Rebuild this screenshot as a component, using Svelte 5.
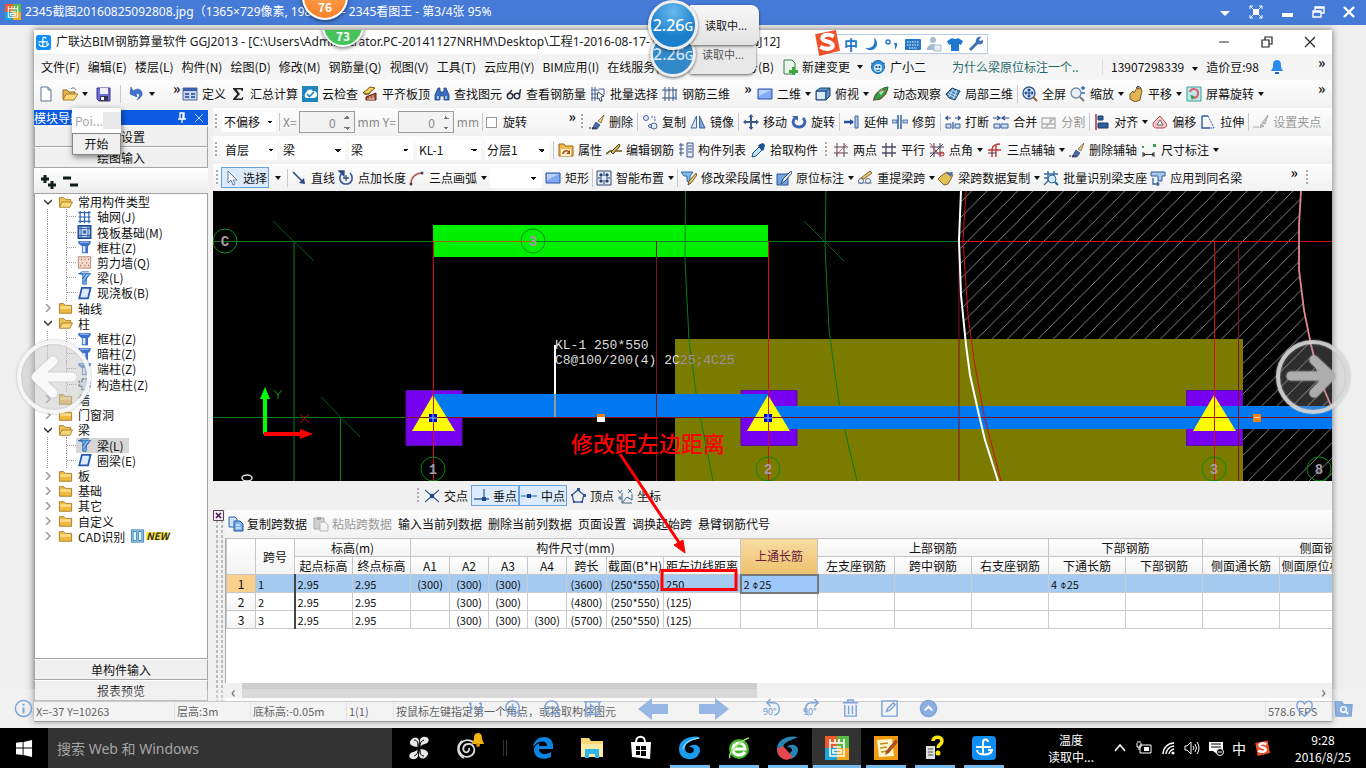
<script>
  const icons = {
    new: '<path d="M3 1h7l3 3v11H3z" fill="#fff" stroke="#5b7190"/><path d="M10 1v3h3" fill="#c9d6ea" stroke="#5b7190"/>',
    open: '<path d="M1 13V4h4l2 2h6v3" fill="#e9b84c" stroke="#8c6a1e"/><path d="M1 14l3-6h12l-4 6z" fill="#ffd977" stroke="#a67c20"/><path d="M9 3c2-2 4-1 5 1" fill="none" stroke="#567"/>',
    save: '<path d="M1 2h13v13H3l-2-2z" fill="#6d6ed6" stroke="#35358a"/><path d="M4 2h8v6H4z" fill="#eef"/><path d="M4 10h8v5H4z" fill="#335"/><path d="M5 11h3v3H5z" fill="#fff"/>',
    undo: '<path d="M4 5c5-4 10-1 9 4-1 2-3 4-5 5 3-4 4-7-1-6l1 3-7-3 1-7z" fill="#3f74cf" stroke="#2a559e" stroke-width=".6"/>',
    define: '<path d="M1 2h14v12H1z" fill="#c4d6f3" stroke="#54698f"/><path d="M1 2h14v3H1z" fill="#3d5ea8"/><path d="M3 7h4v2H3zm0 3h4v2H3zm6-3h4v2H9zm0 3h4v2H9z" fill="#4a6ab0"/>',
    sigma: '<path d="M3 2h10v3h-1l-1-1.500H6.500L10 8l-4 4.500h5.500L12.500 11h.8l-.8 3H3v-1l4.300-5L3 3z" fill="#222"/>',
    cloud: '<path d="M0 0h16v16H0z" fill="#1e86bd"/><path d="M4 12a3 3 0 010-5 4 4 0 017-2 3.500 3.500 0 011 7z" fill="#fff"/><path d="M5 8l2.500 2.500L12 6" fill="none" stroke="#1e86bd" stroke-width="1.600"/>',
    slab: '<path d="M1 7l7-6 5 1-7 6z" fill="#f3cb5a" stroke="#7c5515"/><path d="M2 8l4 1 3-3" fill="none" stroke="#863"/><path d="M4 11l10-4v7H4z" fill="#a34a38" stroke="#5a1d12"/><path d="M5 13h8M8 10v4m3-5v5" stroke="#f0c4a0"/>',
    find: '<path d="M4 2h2v3l1 1h2l1-1V2h2l3 7v5h-5v-4H6v4H1V9z" fill="#3c6fc0" stroke="#1d3e7c" stroke-width=".8"/><path d="M3 10h2v3H3zm8 0h2v3h-2z" fill="#9fc3f3"/>',
    glasses: '<g fill="none" stroke="#2b3440" stroke-width="1.500"><circle cx="4" cy="10" r="2.700"/><circle cx="11" cy="10" r="2.700"/><path d="M7 9l1 0M1.500 9L6 4m7.500 5l1-6"/></g>',
    batch: '<path d="M2 1v14M5 1v14M1 4h8M1 8h6M1 12h5M9 3h5v6" fill="none" stroke="#40619b"/><path d="M8 6l6 4-3 1 1 4-2 0-1-3-2 1z" fill="#fff" stroke="#345"/>',
    rebar: '<path d="M3 1v14M7 1v14M11 1v14M14 3v11M0 4h15M0 12h15" fill="none" stroke="#33507f"/><path d="M1 3l4 3m6 4l4 3" stroke="#7b9acb"/>',
    rect: '<path d="M1 3h14v10H1z" fill="#82aaf2" stroke="#2855a8"/><path d="M2 4h12L2 10z" fill="#bcd2fb"/>',
    cube: '<path d="M1 5l4-3h10v8l-4 4H1z" fill="#5b8fc9" stroke="#20456f"/><path d="M2 6h8v7H2z" fill="#d9ebfb"/><path d="M1 5h10v9M11 5l4-3" fill="none" stroke="#20456f"/>',
    orbit: '<path d="M1 14C1 8 7 2 15 1 14 9 8 14 1 14z" fill="#2fa34a" stroke="#14652a"/><path d="M5 6l4-3 2 2-3 4z" fill="#a7ecae"/><path d="M0 15c2-6 6-10 12-12M5 14c4-1 8-5 9-10" fill="none" stroke="#b0392c"/>',
    local: '<path d="M1 8l6-6 8 3-5 9-6-2z" fill="#4b86b6" stroke="#1e4868"/><path d="M4 6l8 4M7 4l5 3M3 8l7 4M8 3L4 11m8-7L8 13" stroke="#c4e0f4"/>',
    full: '<circle cx="7" cy="7" r="6" fill="#dce9fb" stroke="#3b5c92" stroke-width="1.400"/><path d="M7 3v8M3 7h8M5.500 4.500L7 3l1.500 1.500M5.500 9.500L7 11l1.500-1.500M4.500 5.500L3 7l1.500 1.500M9.500 5.500L11 7 9.500 8.500" fill="none" stroke="#234d96" stroke-width="1.200"/><path d="M11 11l4 4" stroke="#8c6a33" stroke-width="2"/>',
    zoom: '<circle cx="6" cy="7" r="5" fill="#e6f0fb" stroke="#7088a8" stroke-width="1.300"/><path d="M10 11l4 4" stroke="#777" stroke-width="2"/><path d="M11 2h4M13 0v4M11 7h4" stroke="#2d6fc0" stroke-width="1.500"/>',
    hand: '<path d="M2 8l3-3 1 2 3-5 2 1 2-1 1 3-2 9-5 2-5-3z" fill="#e2b455" stroke="#7a5a1a"/><path d="M10 3V0M8 2l2-2 3 2" fill="none" stroke="#444"/>',
    screen: '<path d="M1 1h14v14H1z" fill="#bce9e7" stroke="#3d9aa0"/><path d="M4 6c1-4 8-4 8 1s-4 5-5 5" fill="none" stroke="#e35a6c" stroke-width="2"/><path d="M4 9l5 1-3 4z" fill="#2fa352"/>',
    brush: '<path d="M15 1L9 7l3 2z" fill="#e7c77c" stroke="#6d5730" stroke-width=".7"/><path d="M7 8l4 3-3 4H3z" fill="#4a68ad" stroke="#2a3a66" stroke-width=".7"/><path d="M0 14h7" stroke="#222" stroke-dasharray="2 1"/>',
    copyo: '<g fill="#dfe9f7" stroke="#4c6791"><circle cx="4" cy="4" r="2.500"/><circle cx="12" cy="12" r="3"/><circle cx="8" cy="12" r="1.500"/></g><path d="M9 3h4v4" fill="none" stroke="#4c6791" stroke-dasharray="2 1"/>',
    mirror: '<path d="M6.500 2v12H1z" fill="#dce8f8" stroke="#41659d"/><path d="M9.500 2v12H15z" fill="#7fa4dc" stroke="#41659d"/>',
    move: '<path d="M8 0l2.500 3H9v4h4V5.500L16 8l-3 2.500V9H9v4h1.500L8 16l-2.500-3H7V9H3v1.500L0 8l3-2.500V7h4V3H5.500z" fill="#3c5a88"/>',
    rotate: '<path d="M4 4C0 8 3 13 8 13s8-5 4-9" fill="none" stroke="#3a63b3" stroke-width="2.800"/><path d="M1 2h6v5z" fill="#3a63b3"/>',
    extend: '<path d="M0 8h9" stroke="#234f9c" stroke-width="2.500"/><path d="M6 5l4 3-4 3z" fill="#234f9c"/><path d="M11 2h3v12h-3z" fill="#a9c5ed" stroke="#3f639b"/>',
    trim: '<path d="M0 6h5v3H0zM11 6h5v3h-5z" fill="#b0c7e8" stroke="#3f639b" stroke-width=".8"/><path d="M6 1v14M9 1v14" stroke="#31609f" stroke-width="1.500"/>',
    breaks: '<path d="M1 10h5v4H1zm9 0h5v4h-5z" fill="#cbdcf4" stroke="#3d5f99"/><path d="M0 4h6M10 4h6M3 2L1 4l2 2m10-4l2 2-2 2M8 8v7" fill="none" stroke="#2d4f8d" stroke-width="1.200"/>',
    merge: '<path d="M1 10h6v4H1zm7 0h7v4H8z" fill="#cbdcf4" stroke="#3d5f99"/><path d="M0 4h6M10 4h6M4 2l3 2-3 2m8-4L9 4l3 2" fill="none" stroke="#2d4f8d" stroke-width="1.200"/>',
    split: '<path d="M1 4h13v10H1zM1 10h6M5 13l8-9M9 4v6h5" fill="none" stroke="#b3b3b3" stroke-width="1.400"/>',
    align: '<path d="M2 0v16" stroke="#b0303a" stroke-width="1.500"/><path d="M4 2h5v4H4zm0 7h10v5H4z" fill="#2c6098" stroke="#153c68"/>',
    offset: '<path d="M8 2l6 7c2 4-1 5-4 5H5c-4 0-5-3-3-6z" fill="#f2c8cd" stroke="#b84a57"/><path d="M8 6l3 5H5z" fill="#fff" stroke="#666"/>',
    stretch: '<path d="M2 2h6M2 2v12h8" fill="none" stroke="#2c5aa0" stroke-width="1.400"/><path d="M8 2l6 12h-4" fill="none" stroke="#2c5aa0" stroke-dasharray="2 1"/>',
    grip: '<path d="M15 1L9 9l3 1zM8 10l-1 4 4-2zM0 13h6" fill="#ccc" stroke="#aaa"/>',
    prop: '<path d="M1 2h5l1 2h8v10H1z" fill="#f0bb52" stroke="#9c6414"/><path d="M3 7h10v7H3z" fill="#fff3d0"/><path d="M4 12c1-4 4-5 7-3l1-2v5H8l2-2c-2-1-4 0-4 2z" fill="#a0521a"/>',
    edit: '<path d="M0 12l4-3h12" fill="none" stroke="#6b5a20" stroke-width="1.600"/><path d="M5 10l8-8 1 2-7 8z" fill="#ddb24a" stroke="#4b3a12"/>',
    list: '<path d="M9 1h6v14H9z" fill="#e3ecf8" stroke="#39558a"/><path d="M10 4h4M10 7h4M10 10h4M1 3h5M1 7h5M1 11h5M3 1v13" stroke="#39558a"/>',
    pick: '<path d="M2 15l1-4 6-6 3 3-6 6z" fill="#bde3f8" stroke="#1e4f78"/><path d="M8 4l5 5 1-2 1-4-2-2-3 1z" fill="#1f4f93"/>',
    two: '<path d="M1 5h14M1 11h14M4 1v14M11 1v14" stroke="#5b4753"/><path d="M3 13L14 2" stroke="#a44" stroke-dasharray="2 1"/>',
    para: '<path d="M1 5h14M1 11h14M5 1v14M11 1v14" stroke="#4a4860" stroke-width="1.300"/>',
    angle: '<path d="M1 5h14M1 11h14M5 1v14M11 1v14M1 15L14 2" stroke="#46415e"/><circle cx="13" cy="12" r="2" fill="none" stroke="#d22"/><path d="M1 1l9 12" stroke="#c44"/>',
    three: '<path d="M5 15V7c1-4 4-5 8-5M1 8h13M9 3v12" fill="none" stroke="#b8383c" stroke-width="1.400"/><path d="M1 11h8" stroke="#446"/>',
    dim: '<path d="M2 10v5M13 10v5M2 12.500h11M4 11l-2 1.500L4 14m7-3l2 1.500-2 1.500" fill="none" stroke="#333"/><path d="M1 4h2v2H1zm11-2h3v3h-3z" fill="#3a9a4a"/>',
    select: '<path d="M5 1v12l3-3 2 5 2-1-2-4h4z" fill="#fff" stroke="#667a98"/>',
    line: '<path d="M2 2l11 11" stroke="#2e4a7c" stroke-width="1.600"/><path d="M14 14l-6-1 5-5z" fill="#2e4a7c"/>',
    addlen: '<path d="M4 3C0 8 2 14 8 14s8-6 4-11" fill="none" stroke="#3a5c98" stroke-width="1.600"/><path d="M1 1h5v5zM8 5v6M5 8h6" stroke="#2f4f88" fill="#2f4f88" stroke-width="1.300"/>',
    arc: '<path d="M2 14C2 7 7 3 13 3" fill="none" stroke="#b75a52" stroke-width="1.600"/><circle cx="2" cy="14" r="1.500" fill="#346"/><circle cx="13" cy="3" r="1.500" fill="#346"/>',
    smart: '<path d="M1 1h14v14H1z" fill="#dfe8f4" stroke="#3b4d70"/><path d="M8 2v4M8 10v4M2 8h4M10 8h4M4 4h2v2H4zm6 6h2v2h-2zm0-6h2v2h-2zM4 10h2v2H4z" stroke="#24406e" fill="#24406e"/>',
    seg: '<path d="M0 2h12l-3 4v8l-3-3V6H3z" fill="#86bce8" stroke="#2567a3"/><path d="M15 3L8 11l-1 4 3-2 6-8z" fill="#e8c462" stroke="#4d3c16" stroke-width=".8"/>',
    situ: '<path d="M1 4h11v11H1z" fill="#73a5e0" stroke="#28589c"/><path d="M15 1L7 9l-2 5 4-3 7-8z" fill="#eef4fc" stroke="#2b4574"/>',
    respan: '<path d="M1 13h14" stroke="#7d8aa4"/><circle cx="4" cy="11" r="2.500" fill="none" stroke="#5b7199"/><circle cx="11" cy="11" r="2.500" fill="none" stroke="#5b7199"/><path d="M4 8l9-7 2 2-8 6z" fill="#e6c277" stroke="#8a6a2c"/>',
    datacopy: '<path d="M3 6l6-4 6 3-5 9-4 1-6-6z" fill="#e4c25a" stroke="#7f6318"/><path d="M8 3l5 4 2-5z" fill="#4a6eae"/>',
    ident: '<path d="M1 4h14M1 8h10M5 1v10l-4 4M11 1v4" stroke="#356a9c" fill="none" stroke-width="1.400"/><circle cx="9" cy="9" r="4" fill="#d2e8f6" stroke="#2b6296"/><path d="M12 12l3 3" stroke="#2b6296" stroke-width="2"/>',
    apply: '<path d="M1 2h14v4h-3v5H8V6H1z" fill="#a7c8ec" stroke="#2f5f9c"/><path d="M3 8v6h6m-2-2l2 2-2 2" fill="none" stroke="#2f5f9c" stroke-width="1.300"/>',
    doc: '<path d="M2 1h8l3 3v11H2z" fill="#eaf6ea" stroke="#3b7a4c"/><path d="M7 11h3V8h3v3h3v3h-3v2h-3v-2H7z" fill="#3ba53e"/>',
    face: '<circle cx="8" cy="8" r="6.500" fill="#3391dc" stroke="#1767ad"/><circle cx="8" cy="9" r="4" fill="#cfeafd"/><circle cx="6.500" cy="8" r="1" fill="#135"/><circle cx="9.500" cy="8" r="1" fill="#135"/><path d="M6 11q2 1.500 4 0M1 4l3 1m11-1l-3 1" stroke="#1767ad" fill="none"/>',
    bell: '<path d="M8 1c4 0 4 4 4 6 0 3 2 4 2 5H2c0-1 2-2 2-5 0-2 0-6 4-6z" fill="#2a8bee"/><path d="M6 13h4v2H6z" fill="#1b66b8"/>',
    cross: '<path d="M1 2l14 12M15 2L1 14" stroke="#3b629e" stroke-width="1.200"/><path d="M6 6h4v4H6z" fill="#1c458e"/>',
    perp: '<path d="M1 11h15M11 1v12" stroke="#3b629e" stroke-width="1.300"/><path d="M9 9h4v4H9z" fill="#1c458e"/>',
    mid: '<path d="M0 8h16" stroke="#3b78b8" stroke-width="1.200"/><path d="M6 6h4v4H6z" fill="#123f9a"/>',
    vertex: '<path d="M8 2l6 5-2 7H4L2 7z" fill="none" stroke="#3b629e" stroke-width="1.400"/><path d="M7 0h3v3H7zM1 6h2v2H1zm12 0h3v3h-3zM3 13h2v2H3zm8 0h2v2h-2z" fill="#2c559c"/>',
    coord: '<path d="M5 5v10h10M5 15l5-6 5 3V6" fill="none" stroke="#3c6580"/><path d="M1 2l2 3 2-3M11 1l4 4m0-4l-4 4M2 9h2v2H2z" fill="none" stroke="#47708c"/>',
    copy: '<path d="M1 1h6l2 2v8H1z" fill="#cfe2f8" stroke="#2f67ad"/><path d="M6 5h6l3 3v7H6z" fill="#7db0ea" stroke="#1f559c"/><path d="M8 9h4M8 12h5" stroke="#fff"/>',
    paste: '<path d="M1 2h10v11H1z" fill="#d0d0d0" stroke="#aaa"/><path d="M4 1h4v3H4z" fill="#a5a5a5"/><path d="M7 6h5l3 3v6H7z" fill="#f2f2f2" stroke="#b5b5b5"/>',
    folder: '<path d="M1 14V3h5l2 2h7v9z" fill="#efb83f" stroke="#a07826"/><path d="M2 6h12v3H2z" fill="#fbdc8a"/>',
    folderopen: '<path d="M1 13V3h5l2 2h6v3" fill="#efc25a" stroke="#a07826"/><path d="M1 14l3-6h12l-3 6z" fill="#fcd87c" stroke="#a07826"/>',
    grid: '<path d="M1 3h14M1 8h14M1 13h14M3 1v14M8 1v14M13 1v14" stroke="#2f63b4" stroke-width="1.400"/>',
    raft: '<path d="M1 1h14v14H1z" fill="#cfe0fa" stroke="#1e4b9c" stroke-width="2"/><path d="M4 1v14M12 1v14M1 4h14M1 12h14" stroke="#1e4b9c"/><path d="M6 6h4v4H6z" fill="#3e74cc"/>',
    column: '<path d="M1 1h14v3l-3 3v8H5V7L1 4z" fill="#3c6fca"/><path d="M6 7h3v7H6z" fill="#dbe9fd"/><path d="M3 2h10v1H3z" fill="#c4d9fa"/>',
    wall: '<path d="M1 2h14v13H1z" fill="#f1d9cf" stroke="#b07b66"/><path d="M4 5h1M8 5h1M12 5h1M5 9h1M10 9h1M3 12h1M8 12h1M12 12h1" stroke="#b0552f" stroke-width="1.500"/>',
    beam: '<path d="M1 3l5 1v11h4V8l5-5H9z" fill="#8dbdf2" stroke="#1e65b8"/><path d="M6 9l4-6M7 13l6-8M2 3L5 1h8" stroke="#1d5ba8" fill="none"/>',
    plate: '<path d="M5 2h10l-3 12H2z" fill="#dce9fc" stroke="#2458b0" stroke-width="2"/>',
    poly: '<path d="M5 2h6v3h3v6h-3v3H5v-3H2V5h3z" fill="#dce9fc" stroke="#47699c" stroke-width="2" stroke-dasharray="3 1"/>',
    cad: '<path d="M1 1h14v14H1z" fill="#9dd0f2" stroke="#3d7ba7"/><path d="M3 3h4v10H3zm6 0h4v10H9z" fill="#e8f6ff" stroke="#3d7ba7"/>'
  };

  const menus = ['文件(F)', '编辑(E)', '楼层(L)', '构件(N)', '绘图(D)', '修改(M)', '钢筋量(Q)', '视图(V)', '工具(T)', '云应用(Y)', 'BIM应用(I)', '在线服务(S)'];
  const main1 = [['define', '定义'], ['sigma', '汇总计算'], ['cloud', '云检查'], ['slab', '平齐板顶'], ['find', '查找图元'], ['glasses', '查看钢筋量'], ['batch', '批量选择'], ['rebar', '钢筋三维']];
  const main2 = [['rect', '二维', 1], ['cube', '俯视', 1], ['orbit', '动态观察'], ['local', '局部三维'], null, ['full', '全屏'], ['zoom', '缩放', 1], ['hand', '平移', 1], ['screen', '屏幕旋转', 1]];
  const editA = [['brush', '删除'], null, ['copyo', '复制'], ['mirror', '镜像'], null, ['move', '移动'], ['rotate', '旋转'], null, ['extend', '延伸'], ['trim', '修剪'], null, ['breaks', '打断'], ['merge', '合并'], ['split', '分割', 0, 1], null, ['align', '对齐', 1], ['offset', '偏移'], ['stretch', '拉伸'], null, ['grip', '设置夹点', 0, 1]];
  const listB = [['prop', '属性'], ['edit', '编辑钢筋'], ['list', '构件列表'], ['pick', '拾取构件']];
  const axisB = [['two', '两点'], ['para', '平行'], ['angle', '点角', 1], ['three', '三点辅轴', 1], ['brush', '删除辅轴'], ['dim', '尺寸标注', 1]];
  const drawC = [['line', '直线'], ['addlen', '点加长度'], ['arc', '三点画弧', 1]];
  const drawC2 = [['rect', '矩形'], null, ['smart', '智能布置', 1], null, ['seg', '修改梁段属性'], ['situ', '原位标注', 1], ['respan', '重提梁跨', 1], ['datacopy', '梁跨数据复制', 1], ['ident', '批量识别梁支座'], ['apply', '应用到同名梁']];
  const combos = [['楼层', '首层'], ['构件大类', '梁'], ['构件类型', '梁'], ['构件', 'KL-1'], ['分层', '分层1']];

  const tree = [
    ['常用构件类型', 'open'], ['轴网(J)', 'grid'], ['筏板基础(M)', 'raft'], ['框柱(Z)', 'column'], ['剪力墙(Q)', 'wall'], ['梁(L)', 'beam'], ['现浇板(B)', 'plate'],
    ['轴线', 'shut'], ['柱', 'open'], ['框柱(Z)', 'column'], ['暗柱(Z)', 'column'], ['端柱(Z)', 'column'], ['构造柱(Z)', 'poly'],
    ['墙', 'shut'], ['门窗洞', 'shut'], ['梁', 'open'], ['梁(L)', 'beam', 'sel'], ['圈梁(E)', 'plate'],
    ['板', 'shut'], ['基础', 'shut'], ['其它', 'shut'], ['自定义', 'shut'], ['CAD识别', 'shut', 'new']
  ];

  const colWidths = [29, 39, 58, 58, 39, 39, 39, 39, 40, 57, 77, 77, 77, 77, 77, 77, 77, 77, 88, 77];
  const subHeads = ['起点标高', '终点标高', 'A1', 'A2', 'A3', 'A4', '跨长', '截面(B*H)', '距左边线距离'];
  const subHeads2 = ['左支座钢筋', '跨中钢筋', '右支座钢筋', '下通长筋', '下部钢筋', '侧面通长筋', '侧面原位标注筋', '拉筋'];
  const rows = [
    ['1', '2.95', '2.95', '(300)', '(300)', '(300)', '', '(3600)', '(250*550)', '250', '2 ⌽25', '', '', '', '4 ⌽25', '', '', '', ''],
    ['2', '2.95', '2.95', '', '(300)', '(300)', '', '(4800)', '(250*550)', '(125)', '', '', '', '', '', '', '', '', ''],
    ['3', '2.95', '2.95', '', '(300)', '(300)', '(300)', '(5700)', '(250*550)', '(125)', '', '', '', '', '', '', '', '', '']
  ];
  const axes = [[225, 241, 'C'], [533, 241, '3'], [433, 469, '1'], [768, 469, '2'], [1214, 469, '3'], [1319, 469, '8']];

  const apps = [
    ['搜狗', '', '<g fill="#e8e8e8"><path d="M11 11C4 11 1 7 4 4c3-4 8-3 8 1zM13 11c0-6-1-9 3-10 5-1 7 3 5 5-2 3-5 1-8 5zM13 13c7 0 10 4 7 7-3 4-8 3-8-1zM11 13c0 6 1 9-3 10-5 1-7-3-5-5 2-3 5-1 8-5z"/></g><path d="M7 4c3 0 4 2 4 7M17 4c-3 1-4 3-4 7M17 20c-3 0-4-2-4-7M7 20c3-1 4-3 4-7" fill="none" stroke="#000"/>'],
    ['提醒', '', '<g fill="none" stroke="#ddd" stroke-width="1.800"><path d="M17 6C10 1 2 7 3 14c1 6 8 9 13 5 5-5 1-12-4-11-5 0-6 6-3 8 2 1 5-1 4-4"/><path d="M6 5C0 10 1 19 8 22"/></g><path d="M22-3c4 0 4 4 4 6l2 5H16l2-5c0-2 0-6 4-6z" fill="#f1b40f"/><circle cx="22" cy="9" r="2" fill="#d98f0b"/>'],
    ['Edge', '', '<path d="M2 11C3 4 8 1 13 1c6 0 10 4 9 12H8c0 6 8 6 12 3v5C12 25 3 22 3 14c0-4 3-6 6-7-1 1-1 2-1 3h8c0-6-9-6-14 1z" fill="#0a84e3"/>'],
    ['文件资源管理器', '', '<path d="M1 2h8l2 3h12v16H1z" fill="#f7d774"/><path d="M1 8h22v13H1z" fill="#fce9a4"/><path d="M5 22v-9h14v9h-4v-4H9v4z" fill="#2db4e8"/>'],
    ['应用商店', '', '<path d="M2 6h20l-1 17-18-2z" fill="#fff"/><path d="M7 6c0-7 9-7 9 0" fill="none" stroke="#fff" stroke-width="2"/><path d="M7 10h4v4H7zm5 0h5v4h-5zm-5 5h4v4H7zm5 0h5v5h-5z" fill="#000"/>'],
    ['广联达', 'run', '<path d="M22 1C14-1 1 2 1 13c0 13 20 14 21 1 0-5-7-7-11-3 3 0 5 1 5 3-1 5-9 4-9-2C7 6 14 5 22 1z" fill="#1c9cf0"/><path d="M21 2C13 4 7 5 5 13" fill="none" stroke="#8bd6ff" stroke-width="1.500"/>'],
    ['360浏览器', 'run', '<circle cx="12" cy="13" r="10" fill="#46b82c"/><path d="M6 13h12c0-8-12-8-12 0s9 7 12 3" fill="none" stroke="#fff" stroke-width="3"/><path d="M3 22C0 18 14 4 22 2" fill="none" stroke="#a5e887" stroke-width="1.600"/>'],
    ['广联达服务', 'run', '<path d="M22 1C14-1 1 2 1 13c0 13 20 14 21 1 0-5-7-7-11-3 3 0 5 1 5 3-1 5-9 4-9-2C7 6 14 5 22 1z" fill="#2585b5"/><path d="M1 13l6-3 10 11-6 3C4 23 1 18 1 13z" fill="#e2474f"/>'],
    ['2345看图王', 'run on', '<path d="M0 0h12v12H0z" fill="#f0592a"/><path d="M12 0h12v12H12z" fill="#57b947"/><path d="M0 12h12v12H0z" fill="#1fa3dc"/><path d="M12 12h12v12H12z" fill="#f3a51c"/><path d="M5 7h14v13H5zM5 3v4M10 3v4M14 3v4M19 3v4M8 11h8M8 14h8v3H8z" fill="none" stroke="#fff" stroke-width="1.600"/>'],
    ['便签', 'run', '<path d="M0 0h24v24H0z" fill="#f29a12"/><path d="M3 4l15-1 2 17-15 1z" fill="#fff6cf"/><path d="M6 8l8-1M6 12l7-1M7 16l7-1" stroke="#c58a2a" stroke-width="1.500"/><path d="M22 3L12 15l-1 4 4-2L24 6z" fill="#a8541a"/>'],
    ['帮助', 'run', '<path d="M3 10h9v13H3z" fill="#ddd"/><path d="M5 13h5M5 16h5M5 19h5" stroke="#555"/><path d="M10 5c0-5 9-5 9 0 0 4-4 3-4 7" fill="none" stroke="#ffe70e" stroke-width="3.500"/><circle cx="15" cy="17" r="2.500" fill="#ffe70e"/>'],
    ['GGJ2013', 'run', '<rect width="24" height="24" rx="4" fill="#0d8ff5"/><path d="M11 19V6a2.500 2.500 0 015 0M4 11h15M5 14c0 6 14 6 15 0h-4" fill="none" stroke="#fff" stroke-width="2"/>']
  ];
</script>

{#snippet ic(name)}
  <svg class="ic" viewBox="0 0 16 16" aria-hidden="true">{@html icons[name]}</svg>
{/snippet}
{#snippet tools(items)}
  {#each items as t}
    {#if t}
      <button class="tool" disabled={!!t[3]}>{@render ic(t[0])}<span>{t[1]}</span>{#if t[2]}<i class="caret"></i>{/if}</button>
    {:else}
      <span class="sep"></span>
    {/if}
  {/each}
{/snippet}

<div class="viewer">
  <header class="vbar">
    <svg class="vlogo" viewBox="0 0 24 24" aria-hidden="true">{@html apps[8][2]}</svg>
    <h1>2345截图20160825092808.jpg（1365×729像素, 198KB） - 2345看图王 - 第3/4张 95%</h1>
    <div class="vctl">
      <button aria-label="菜单"><svg viewBox="0 0 14 14"><path d="M2 6h10l-5 5z" fill="#fff"/></svg></button>
      <button aria-label="全屏"><svg viewBox="0 0 14 14"><path d="M4 4h6v6H4z" fill="#fff"/><path d="M1 4V1h3M10 1h3v3M13 10v3h-3M4 13H1v-3M1 1l3 3M13 1l-3 3M13 13l-3-3M1 13l3-3" fill="none" stroke="#fff"/></svg></button>
      <button aria-label="最小化"><svg viewBox="0 0 14 14"><path d="M2 8h11v4H2z" fill="#fff"/></svg></button>
      <button aria-label="还原"><svg viewBox="0 0 14 14"><path d="M4 5V2h9v6h-3M2 6h8v6H2zM2 7h8M4 3h9" fill="none" stroke="#fff" stroke-width="1.400"/></svg></button>
      <button aria-label="关闭"><svg viewBox="0 0 14 14"><path d="M2 2l10 10M12 2L2 12" stroke="#fff" stroke-width="2.400"/></svg></button>
    </div>
  </header>

  <main class="stage">
    <section class="app">
      <div class="atitle">
        <svg class="alogo" viewBox="0 0 24 24" aria-hidden="true">{@html apps[11][2]}</svg>
        <h2>广联达BIM钢筋算量软件 GGJ2013 - [C:\Users\Administrator.PC-20141127NRHM\Desktop\工程1-2016-08-17-18-20-35-合并版.GGJ12]</h2>
        <div class="actl">
          <button aria-label="最小化"><svg viewBox="0 0 12 12"><path d="M1 6h10" stroke="#333"/></svg></button>
          <button aria-label="还原"><svg viewBox="0 0 12 12"><path d="M1 4h7v7H1zM4 4V1h7v7H8" fill="none" stroke="#222" stroke-width="1.200"/></svg></button>
          <button aria-label="关闭"><svg viewBox="0 0 12 12"><path d="M1 1l10 10M11 1L1 11" stroke="#222" stroke-width="1.200"/></svg></button>
        </div>
      </div>

      <nav class="menu">
        <div class="mlist">{#each menus as m}<button>{m}</button>{/each}</div>
        <button class="ver">版本号(B)</button>
        <div class="mtools">{@render tools([['doc', '新建变更', 1], ['face', '广小二']])}</div>
        <a class="tip" href="#top">为什么梁原位标注一个..</a>
        <div class="user"><button>13907298339<i class="caret wide"></i></button><span>造价豆:98</span>{@render ic('bell')}</div>
        <b class="more">»</b>
      </nav>

      <div class="bar main">
        <div class="grp file">
          <button class="tool" aria-label="新建">{@render ic('new')}</button>
          <button class="tool" aria-label="打开">{@render ic('open')}<i class="caret"></i></button>
          <button class="tool" aria-label="保存">{@render ic('save')}</button>
          <span class="sep"></span>
          <button class="tool" aria-label="撤销">{@render ic('undo')}<i class="caret"></i></button>
          <b class="more">»</b>
        </div>
        <div class="grp">{@render tools(main1)}<b class="more">»</b></div>
        <div class="grp">{@render tools(main2)}</div>
        <b class="more">»</b>
      </div>

      <div class="body">
        <aside class="side">
          <div class="shead"><span>模块导航栏</span><svg viewBox="0 0 12 12"><path d="M4 1h4v6H4zM2 7h8M6 7v4M7 1v6" fill="none" stroke="#fff" stroke-width="1.300"/></svg><svg viewBox="0 0 12 12"><path d="M2 2l8 8M10 2l-8 8" stroke="#b9d2f8"/></svg></div>
          <button class="sbtn">工程设置</button>
          <button class="sbtn">绘图输入</button>
          <div class="pm"><svg viewBox="0 0 40 16" aria-hidden="true"><path d="M1 5h8M5 1v8M8 11h8M12 7v8M23 4h8M30 11h8" stroke="#0e1f1c" stroke-width="3"/></svg></div>
          <div class="tree">
            <ul>
              {#each tree as [name, kind, flag]}
                {#if kind === 'open' || kind === 'shut'}
                  <li class="branch">
                    <svg class="tw" viewBox="0 0 8 8"><path d={kind === 'open' ? 'M0 2l4 4 4-4' : 'M2 0l4 4-4 4'} fill="none" stroke={kind === 'open' ? '#333' : '#999'} stroke-width="1.500"/></svg>
                    {@render ic(kind === 'open' ? 'folderopen' : 'folder')}
                    <span>{name}</span>
                    {#if flag === 'new'}{@render ic('cad')}<em>NEW</em>{/if}
                  </li>
                {:else}
                  <li class="leaf"><i class="stem"></i><span class="node" class:sel={flag === 'sel'}>{@render ic(kind)}<span>{name}</span></span></li>
                {/if}
              {/each}
            </ul>
          </div>
          <button class="sbtn">单构件输入</button>
          <button class="sbtn">报表预览</button>
        </aside>

        <div class="work">
          <div class="bar a">
            <div class="grp off">
              <i class="grip"></i>
              <select class="short" aria-label="偏移方式"><option>不偏移</option></select>
              <span class="sep"></span>
              <label>X=<input type="text" value="0" disabled /></label><span class="dis">mm</span>
              <label>Y=<input type="text" value="0" disabled /></label><span class="dis">mm</span>
              <span class="sep"></span>
              <label class="chk"><input type="checkbox" />旋转</label>
              <b class="more">»</b>
            </div>
            <div class="grp"><i class="grip"></i>{@render tools(editA)}</div>
          </div>
          <div class="bar b">
            <div class="grp"><i class="grip"></i><div class="combos">{#each combos as c}<select aria-label={c[0]}><option>{c[1]}</option></select>{/each}</div><span class="sep"></span>{@render tools(listB)}</div>
            <div class="grp"><i class="grip"></i>{@render tools(axisB)}</div>
          </div>
          <div class="bar c">
            <div class="grp">
              <i class="grip"></i>
              <button class="tool on">{@render ic('select')}<span>选择</span></button><i class="caret"></i>
              <span class="sep"></span>
              {@render tools(drawC)}
              <select class="blank" aria-label="圆弧方式"><option></option></select>
              {@render tools(drawC2)}
            </div>
            <b class="more">»</b><i class="grip"></i>
          </div>

          <svg class="cad" viewBox="213 191 1119 290" preserveAspectRatio="xMinYMin slice">
            <defs>
              <pattern id="hatch" width="15.300" height="15.300" patternUnits="userSpaceOnUse"><path d="M-1 16.300L16.300-1" stroke="#a8a8a8" stroke-width=".8"/></pattern>
            </defs>
            <rect x="213" y="191" width="1119" height="290" fill="#000"/>
            <path d="M962 191L960 240 962 295 967 345 971 380V481H1332V408L1320 380 1311 345 1304 310 1299 270V225L1301 191z" fill="url(#hatch)"/>
            <path d="M675 339h568v142H675z" fill="#7b7b00"/>
            <path d="M433 225h335v32H433z" fill="#00f000"/>
            <g fill="none" stroke="#0b7a1c">
              <path d="M213 241.500h220M533 241.500h427M213 417.500h193M294 241v240M340.500 417v64" />
              <path d="M273 221l41 40M321 397l39 40M804 221l40 40" stroke="#0b5a16"/>
              <path d="M685.500 191L685 260 689 340 697 400 713 481M826 191L825 245 829 330 840 410 857 481"/>
            </g>
            <g fill="#7700f0" stroke="#57139c"><path d="M406 390.500h56v55h-56zM741 390.500h56v55h-56zM1186.500 390.500h56v55h-56z"/></g>
            <path d="M433 394h335v23H433zM768 406h564v23H768z" fill="#0078f0"/>
            <path d="M433 395l22 36h-43zM768 395l22 36h-43zM1214 395l22 36h-43z" fill="#ff0"/>
            <g fill="none" stroke="#d01018">
              <path d="M433.500 241v240M768.500 241v240M1214.500 241v240M960 241.500h372"/>
              <path d="M433 241.500h100" stroke="#a86010"/>
              <path d="M656.500 241v240M959 241v240M1238.500 241v240M406 417.500h926" stroke="#801020"/>
              <path d="M966 191L963 240 968 315 974 360 984 415 1001 481"/>
            </g>
            <path d="M961 191L959 240 961 295 966 345 970 375 979 415 985 440 998 481" fill="none" stroke="#fff" stroke-width="2"/>
            <path d="M1301 191L1299 225V270L1304 310 1311 345 1320 380 1332 408" fill="none" stroke="#e08890" stroke-width="1.800"/>
            <path d="M555 345v49" stroke="#fff" stroke-width="2"/><path d="M555 394v23" stroke="#999" stroke-width="2"/>
            <path d="M597 414h8v4h-8z" fill="#f08010"/><path d="M597 417h8v5h-8z" fill="#fff"/>
            <path d="M1253 414h8v8h-8z" fill="#f08010"/><path d="M1254 417.500h6" stroke="#ffd9a0"/>
            <path d="M429 414h8v8h-8zM764 414h8v8h-8z" fill="#0000d0"/><path d="M433 414v8M429 418h8M768 414v8M764 418h8" stroke="#8cf"/>
            <path d="M265 434v-36" stroke="#0f0" stroke-width="4"/><path d="M265 387l5 12h-10z" fill="#0f0"/>
            <path d="M264 434h37" stroke="#f00" stroke-width="4"/><path d="M313 434l-13-5v10z" fill="#f00"/>
            <path d="M274 390l4 5 4-5M278 395v4" fill="none" stroke="#0b9a1c"/><path d="M300 414l9 9M309 414l-9 9" stroke="#c00"/>
            {#each axes as [x, y, t]}
              <circle cx={x} cy={y} r="12" fill="none" stroke="#0a8a1a"/>
              <text x={x} y={y + 5} class="axis">{t}</text>
            {/each}
            <ellipse cx="247" cy="478" rx="5" ry="3" fill="none" stroke="#ddd" stroke-width="1.500"/>
            <text x="555" y="349" class="lbl">KL-1 250*550</text>
            <text x="555" y="364" class="lbl">C8@100/200(4) 2C<tspan fill="#a08fa0">25;4C25</tspan></text>
          </svg>

          <div class="bar snap">
            <i class="grip"></i>
            <button class="tool">{@render ic('cross')}<span>交点</span></button>
            <div class="pair"><button class="tool on">{@render ic('perp')}<span>垂点</span></button><button class="tool on">{@render ic('mid')}<span>中点</span></button></div>
            {@render tools([['vertex', '顶点'], ['coord', '坐标']])}
          </div>

          <div class="sheet">
            <div class="handle"><svg viewBox="0 0 11 11"><path d="M.500.500h10v10H.500z" fill="#f4ecf0" stroke="#545"/><path d="M3 3l5 5M8 3L3 8" stroke="#415" stroke-width="1.500"/></svg></div>
            <div class="pane">
              <div class="bar edit">
                {@render tools([['copy', '复制跨数据'], ['paste', '粘贴跨数据', 0, 1]])}
                {#each ['输入当前列数据', '删除当前列数据', '页面设置', '调换起始跨', '悬臂钢筋代号'] as t}<button>{t}</button>{/each}
              </div>
              <div class="tbl">
                <table>
                  <colgroup>{#each colWidths as w}<col style:width="{w}px" />{/each}</colgroup>
                  <thead>
                    <tr><th rowspan="2"></th><th rowspan="2">跨号</th><th colspan="2">标高(m)</th><th colspan="7">构件尺寸(mm)</th><th rowspan="2" class="hot">上通长筋</th><th colspan="3">上部钢筋</th><th colspan="2">下部钢筋</th><th colspan="3">侧面钢筋</th></tr>
                    <tr>{#each [...subHeads, ...subHeads2] as h}<th>{h}</th>{/each}</tr>
                  </thead>
                  <tbody>
                    {#each rows as r, i}
                      <tr class:cur={i === 0}>
                        <th>{i + 1}</th>
                        {#each r as c, j}<td class:focus={i === 0 && j === 10} class:dark={j === 1} class:mid={j > 2 && j < 9}>{c}</td>{/each}
                      </tr>
                    {/each}
                  </tbody>
                </table>
              </div>
              <div class="scroll"><i>‹</i><span class="track"><span class="thumb"></span></span><i>›</i></div>
            </div>
          </div>

          <svg class="note" viewBox="213 108 1119 594" preserveAspectRatio="xMinYMin slice">
            <text x="571" y="452">修改距左边距离</text>
            <path d="M620 454l60 90" stroke="#f00" stroke-width="3"/><path d="M685 553l-11-8 9-5z" fill="#f00" stroke="#f00"/>
            <path d="M662 570.500h74v19h-74z" fill="none" stroke="#f00" stroke-width="3"/>
          </svg>
        </div>
      </div>

      <footer class="status"><span>X=-37 Y=10263</span><span>层高:3m</span><span>底标高:-0.05m</span><span>1(1)</span><span>按鼠标左键指定第一个角点，或拾取构件图元</span><span>578.6 FPS</span></footer>
    </section>

    <div class="poi"><div>Poi...<i></i></div><button>开始</button></div>

    <div class="ime">
      <svg class="sg" viewBox="0 0 26 26"><path d="M2 5l20-4 4 20-20 5z" fill="#f0512a"/><path d="M20 7c-6-3-11-1-11 2 0 4 10 2 10 7 0 4-8 4-12 1" fill="none" stroke="#fff" stroke-width="4"/></svg>
      <b>中</b>
      <svg viewBox="0 0 16 16"><path d="M11 2c2 8-3 11-9 10 4 4 12 2 12-4 0-3-1-5-3-6z" fill="#2678c8"/></svg>
      <svg viewBox="0 0 16 16"><circle cx="4" cy="6" r="2" fill="none" stroke="#2678c8" stroke-width="1.500"/><path d="M10 7h3v3l-2 4 0-4z" fill="#2678c8"/></svg>
      <svg viewBox="0 0 16 16"><rect y="3" width="16" height="11" rx="1" fill="#2678c8"/><path d="M2 6h12M2 9h12M4 12h8" stroke="#fff" stroke-dasharray="1.500 1"/></svg>
      <svg viewBox="0 0 16 16"><circle cx="7" cy="4" r="3" fill="#a5bcd4"/><path d="M1 14c0-8 11-8 12 0z" fill="#a5bcd4"/><path d="M8 9h7v6H8z" fill="#e8eef5" stroke="#a5bcd4"/></svg>
      <svg viewBox="0 0 16 16"><path d="M5 2q3 2 6 0l5 3-2 4-2-1v7H4V8L2 9 0 5z" fill="#1f78cf"/></svg>
      <svg viewBox="0 0 16 16"><path d="M2 14l7-7" stroke="#3a72b4" stroke-width="3"/><path d="M8 7c-1-4 2-7 5-6l-2 3 1 1 3-1c1 4-3 6-7 3z" fill="#3a72b4"/></svg>
    </div>

    <button class="nav prev" aria-label="上一张"><svg viewBox="0 0 76 76"><circle cx="38" cy="38" r="35" fill="rgba(220,220,220,.3)" stroke="rgba(255,255,255,.85)" stroke-width="4"/><path d="M56 38H22M37 22L20 38l17 16" fill="none" stroke="rgba(255,255,255,.9)" stroke-width="9" stroke-linecap="round" stroke-linejoin="round"/></svg></button>
    <button class="nav next" aria-label="下一张"><svg viewBox="0 0 76 76"><circle cx="38" cy="38" r="35" fill="rgba(160,160,160,.15)" stroke="rgba(225,225,225,.75)" stroke-width="4"/><path d="M16 37h36M39 21l17 16-17 17" fill="none" stroke="rgba(175,175,175,.9)" stroke-width="9" stroke-linecap="round" stroke-linejoin="round"/></svg></button>

    <div class="vtools">
      <svg style:left="14px" viewBox="0 0 20 20"><circle cx="10" cy="10" r="8.500"/><path d="M10 5v2M10 9v6" stroke-width="2"/></svg>
      <svg style:left="467px" viewBox="0 0 20 20"><path d="M4 4v12M2 5l2-1M15 4v12M13 5l2-1M9.500 7v2M9.500 12v2"/></svg>
      <svg style:left="504px" viewBox="0 0 20 20"><circle cx="9" cy="9" r="7"/><path d="M9 5v8M5 9h8M14 14l4 4"/></svg>
      <svg style:left="543px" viewBox="0 0 20 20"><circle cx="9" cy="9" r="7"/><path d="M5 9h8M14 14l4 4"/></svg>
      <svg style:left="583px" viewBox="0 0 20 20"><path d="M1 3h18M3 3v13h14V3M6 16l-2 3M14 16l2 3M8 6v8l5-4z"/></svg>
      <svg class="big" style:left="637px" viewBox="0 0 32 24"><path d="M1 12L15 1v6h16v10H15v6z"/></svg>
      <svg class="big" style:left="698px" viewBox="0 0 32 24"><path d="M31 12L17 1v6H1v10h16v6z"/></svg>
      <span style:left="763px"><svg viewBox="0 0 20 20"><path d="M5 4h6c8 0 8 12 1 13M8 0L4 4l4 4"/></svg><small>90°</small></span>
      <span style:left="803px"><svg viewBox="0 0 20 20"><path d="M15 4H9C1 4 1 16 6 17M12 0l4 4-4 4"/></svg><small>90°</small></span>
      <svg style:left="841px" viewBox="0 0 20 20"><path d="M2 4h16M7 3V1h6v2M4 6v12h12V6M8 7v9M12 7v9"/></svg>
      <svg style:left="880px" viewBox="0 0 20 20"><path d="M2 2h16v16H2zM7 13l1-3 6-6 2 2-6 6z"/></svg>
      <svg style:left="919px" viewBox="0 0 20 20"><circle cx="10" cy="10" r="8.500" fill="#8bb0df"/><path d="M6 12l4-4 4 4" stroke="#fff" stroke-width="2"/></svg>
      <svg style:left="1295px" viewBox="0 0 20 20"><path d="M10 18C-5 6 5-2 10 5c5-7 15 1 0 13z"/></svg>
      <svg style:left="1334px" viewBox="0 0 20 20"><path d="M1 3h7l2 3h9l-1 12H2z" fill="#8bb0df"/><circle cx="10" cy="11" r="3" stroke="#fff"/><path d="M12 13l3 3" stroke="#fff"/></svg>
    </div>
  </main>

  <div class="ball orange"><b>76</b></div>
  <div class="ballclip"><div class="ball green"><b>73</b></div></div>
  <div class="mem low"><b>2.26<small>G</small></b><span>读取中...</span></div>
  <div class="mem"><b>2.26<small>G</small></b><span>读取中...</span></div>

  <footer class="task">
    <button class="start" aria-label="开始"><svg viewBox="0 0 18 18"><path d="M0 3l7-1v6H0zM8 2l9-2v8H8zM0 9h7v7l-7-1zM8 9h9v9l-9-2z" fill="#fff"/></svg></button>
    <input class="search" type="text" aria-label="搜索" placeholder="搜索 Web 和 Windows" />
    <div class="apps">
      {#each apps as a, i}
        {#if i === 2}<i class="div"></i>{/if}
        <button class="ta {a[1]}" aria-label={a[0]}><svg viewBox="0 0 24 24">{@html a[2]}</svg></button>
      {/each}
    </div>
    <div class="temp">温度<br />读取中...</div>
    <div class="tray">
      <svg viewBox="0 0 16 16"><path d="M3 11l5-6 5 6" fill="none" stroke="#fff" stroke-width="1.500"/></svg>
      <svg viewBox="0 0 16 16"><path d="M4 5h11v8H4zM1 3v4h4V3M2 1v2M4 1v2M3 7v3" fill="none" stroke="#fff"/><path d="M8 7h5v4H8z" fill="#fff"/></svg>
      <svg viewBox="0 0 16 16"><path d="M3 14C3 8 8 3 14 3M6 14c0-4 4-8 8-8M9 14c0-2 3-5 5-5" fill="none" stroke="#fff" stroke-width="1.300"/><circle cx="13" cy="13" r="1.500" fill="#fff"/></svg>
      <svg viewBox="0 0 16 16"><path d="M1 6h2l4-4v12l-4-4H1zM9 6q2 2 0 4M11 4q3 4 0 8M13 2q4 6 0 12" fill="none" stroke="#fff"/></svg>
      <svg viewBox="0 0 16 16"><path d="M1 2h14v8h-3l-3 4-4-3H1z" fill="#fff"/><path d="M3 4h10M3 7h10" stroke="#000"/><circle cx="12" cy="12" r="3.500" fill="#000" stroke="#fff"/><path d="M10 12h4" stroke="#fff"/></svg>
      <span>中</span>
      <svg viewBox="0 0 26 26"><path d="M2 5l20-4 4 20-20 5z" fill="#f0512a"/><path d="M20 7c-6-3-11-1-11 2 0 4 10 2 10 7 0 4-8 4-12 1" fill="none" stroke="#fff" stroke-width="4"/></svg>
    </div>
    <div class="clock">9:28<br />2016/8/25</div>
  </footer>
</div>

<style>
  :global(body) { margin: 0; overflow: hidden; }
  .viewer { position: relative; display: flex; flex-direction: column; height: 100vh; background: #efefef; font-family: "Noto Sans CJK SC", sans-serif; font-size: 12px; line-height: 16px; color: #111; overflow: hidden; }
  button { border: 0; background: none; padding: 0; font: inherit; color: inherit; white-space: nowrap; }
  h1, h2 { margin: 0; font-size: 12px; font-weight: 400; white-space: nowrap; }
  svg { display: block; flex: none; }
  i { font-style: normal; }

  .vbar { display: flex; align-items: center; height: 25px; background: #457ad6; color: #fff; padding: 0 10px 2px 5px; box-sizing: border-box; flex: none; }
  .vlogo { width: 16px; height: 16px; margin-right: 4px; }
  h1 { font-family: "Noto Sans", "Noto Sans CJK SC", sans-serif; flex: 1; }
  .vctl { display: flex; gap: 17px; }
  .vctl svg { width: 14px; height: 14px; }

  .stage { flex: 1; min-height: 0; display: flex; padding: 5px 34px 6px; background: #efefef; position: relative; }
  .app { flex: 1; min-width: 0; display: flex; flex-direction: column; background: #f0f0f0; box-shadow: 0 0 7px rgba(0, 0, 0, .55); }
  .atitle { display: flex; align-items: center; height: 24px; background: #fff; padding: 0 16px 0 2px; }
  .alogo { width: 15px; height: 15px; margin-right: 5px; }
  h2 { flex: 1; font-family: "Noto Sans", "Noto Sans CJK SC", sans-serif; color: #222; overflow: hidden; }
  .actl { display: flex; gap: 31px; }
  .actl svg { width: 12px; height: 12px; }

  .menu { display: grid; grid-template-columns: 680px 68px 156px 164px 1fr 14px; height: 26px; align-items: center; background: linear-gradient(#f2f2f2, #f6f6f6); }
  .mlist { display: flex; gap: 8px; padding-left: 7px; overflow: hidden; }
  .ver { text-align: right; padding-right: 8px; }
  .mtools { display: flex; gap: 4px; }
  .tip { color: #1f6b6b; text-decoration: none; padding-left: 14px; }
  .user { display: flex; gap: 10px; align-items: center; border-left: 1px solid #ddd; padding-left: 8px; }
  .user button { margin-right: -2px; }
  .more { font-size: 14px; line-height: 8px; color: #111; align-self: flex-start; padding-top: 4px; }

  .bar { display: flex; align-items: center; height: 28px; background: linear-gradient(#fdfdfd, #f1f1f1); white-space: nowrap; }
  .grp { display: flex; align-items: center; gap: 4px; height: 100%; }
  .main { display: grid; grid-template-columns: 148px 575px 1fr 14px; }
  .file { gap: 8px; padding-left: 4px; }
  .file .more { margin-left: 10px; }
  .grp > .more { margin-left: 10px; }
  .tool { display: flex; align-items: center; gap: 4px; height: 20px; }
  .tool:disabled { color: #9a9a9a; }
  .ic { width: 16px; height: 16px; }
  .caret { width: 0; height: 0; border: 3px solid transparent; border-top: 4px solid #111; border-bottom: 0; display: inline-block; vertical-align: middle; }
  .mtools .caret { margin: 0 3px; }
  .caret.wide { margin: 0 0 0 8px; }
  .sep { width: 1px; height: 18px; background: #c8c8c8; }
  .grip { width: 2px; height: 16px; margin: 0 2px; background: repeating-linear-gradient(#aaa 0 2px, transparent 2px 4px); }

  .body { flex: 1; min-height: 0; display: grid; grid-template-columns: 174px minmax(0, 1fr); gap: 5px; }
  .side { display: flex; flex-direction: column; padding-top: 2px; min-height: 0; }
  .shead { display: flex; gap: 5px; align-items: center; height: 15px; background: #0c5be2; color: #fff; padding-right: 3px; margin-bottom: 1px; }
  .shead span { flex: 1; line-height: 14px; }
  .shead svg { width: 12px; height: 12px; }
  .sbtn { height: 21px; border: 1px solid #a5a5a5; border-top-color: #fff; background: #f0f0f0; box-sizing: border-box; }
  .pm { height: 22px; display: flex; align-items: center; padding: 3px 6px 0; background: linear-gradient(#fff, #ededed); }
  .pm svg { width: 40px; height: 16px; }
  .tree { flex: 1; min-height: 0; border: 1px solid #a0a0a0; background: #fff; overflow: hidden; }
  ul { list-style: none; margin: 0; padding: 0; display: grid; grid-auto-rows: 1fr; height: 350px; }
  li { display: flex; align-items: center; min-height: 0; line-height: 15px; }
  li .ic { width: 15px; height: 14px; }
  .branch { gap: 5px; padding-left: 9px; }
  .tw { width: 8px; height: 8px; margin-right: 1px; }
  em { font-size: 10px; font-weight: 700; background: #ffe94a; color: #332; line-height: 8px; margin-left: -4px; }
  .leaf { background: repeating-linear-gradient(#999 0 1px, transparent 1px 2px) 12px 0 / 1px 100% no-repeat; }
  .stem { width: 9px; height: 100%; margin-left: 31px; border-left: 1px dotted #999; background: repeating-linear-gradient(90deg, #999 0 1px, transparent 1px 2px) 0 50% / 100% 1px no-repeat; }
  .node { display: flex; align-items: center; gap: 5px; padding: 0 5px 0 1px; }
  .sel { background: #d6d6d6; }

  .work { position: relative; display: flex; flex-direction: column; min-width: 0; min-height: 0; }
  .a { display: grid; grid-template-columns: 366px 1fr; }
  .off { gap: 3px; }
  select { appearance: none; border: 0; padding: 0 12px 0 2px; margin: 0; height: 20px; width: 64px; font: inherit; color: inherit; border-radius: 0; background: linear-gradient(45deg, transparent 50%, #111 50%) 54px 9px / 3px 3px no-repeat, linear-gradient(-45deg, transparent 50%, #111 50%) 57px 9px / 3px 3px no-repeat, #fff; }
  select.short, .b .combos select:first-child { width: 54px; background-position: 45px 9px, 48px 9px, 0 0; }
  select.blank { width: 52px; background-position: 41px 9px, 44px 9px, 0 0; }
  label { display: flex; align-items: center; gap: 2px; color: #888; }
  label input[type="text"] { width: 56px; height: 22px; box-sizing: border-box; border: 1px solid #9a9a9a; background: #f2f2f2; color: #888; text-align: right; padding: 0 18px 0 0; font: inherit; background-image: linear-gradient(135deg, transparent 50%, #777 50%), linear-gradient(-135deg, transparent 50%, #777 50%), linear-gradient(45deg, transparent 50%, #777 50%), linear-gradient(-45deg, transparent 50%, #777 50%); background-size: 3px 3px; background-repeat: no-repeat; background-position: 44px 4px, 47px 4px, 44px 15px, 47px 15px; }
  .dis { color: #888; }
  .chk { color: #111; gap: 6px; }
  .chk input { appearance: none; width: 11px; height: 11px; border: 1px solid #999; background: #fff; margin: 0; }
  .off > .more { margin-left: auto; margin-right: 3px; }
  .b { display: grid; grid-template-columns: 610px 1fr; }
  .combos { display: flex; gap: 4px; }
  .c { height: 27px; }
  .c > .grp { flex: 1; gap: 3px; }
  .c > .grp > .grip { margin: 0 0 0 3px; }
  .c > .grp > .caret { margin: 0 3px; }
  .c > .grip { margin: 0 24px 0 8px; }
  .on { background: #dcebfc; box-shadow: inset 0 0 0 1px #66a3e0; padding: 0 2px; height: 21px; }

  .cad { width: 100%; height: 290px; background: #000; }
  .axis { font: 700 14px "Liberation Mono", monospace; fill: #a898a8; text-anchor: middle; }
  .lbl { font: 13px "Liberation Mono", monospace; fill: #ddd; }
  .snap { height: 29px; background: #f0f0f0; padding-left: 202px; gap: 3px; }
  .pair { display: flex; }

  .sheet { flex: 1; min-height: 0; display: grid; grid-template-columns: 12px minmax(0, 1fr); }
  .handle { background: repeating-linear-gradient(transparent 0 3px, #f0f0f0 3px 5px), repeating-linear-gradient(90deg, transparent 0 3px, #bbb 3px 5px); }
  .handle svg { width: 11px; height: 11px; }
  .pane { display: flex; flex-direction: column; min-width: 0; min-height: 0; background: #fff; }
  .edit { gap: 6px; padding-left: 3px; }
  .edit .tool { gap: 3px; }
  .tbl { flex: 1; min-height: 0; overflow: hidden; border-left: 1px solid #aaa; }
  table { border-collapse: collapse; table-layout: fixed; width: 1218px; }
  tr { height: 18px; }
  th, td { box-sizing: border-box; height: 18px; padding: 0; border: 1px solid #c6c6c6; font-weight: 400; line-height: 16px; white-space: nowrap; overflow: hidden; }
  th { background: linear-gradient(#fff, #f3f3f3); }
  td { font-size: 11px; padding-left: 2px; border-color: #ccc; }
  .mid { text-align: center; padding: 0; }
  .dark { border-left: 2px solid #444; }
  .hot { background: linear-gradient(#f8dca4, #eec06c); color: #6a1a3a; }
  .cur td { background: #a5caf2; }
  .cur th { background: #fad08c; }
  .cur .focus { background: #9cc8fa; border: 2px solid #777; }
  .scroll { display: flex; align-items: center; height: 15px; background: #f0f0f0; margin-bottom: 3px; }
  .scroll i { width: 17px; text-align: center; font-size: 16px; line-height: 12px; }
  .track { flex: 1; height: 15px; }
  .thumb { display: block; width: 48%; height: 15px; background: #cdcdcd; }
  .note { position: absolute; inset: 0; width: 100%; height: 100%; pointer-events: none; }
  .note text { font-size: 22px; font-weight: 500; fill: #f00; }

  .status { display: grid; grid-template-columns: 141px 76px 96px 47px 1fr 66px; height: 21px; border-top: 1px solid #bbb; border-bottom: 1px solid #777; box-sizing: border-box; background: #f3f3f3; font-size: 11px; line-height: 19px; color: #222; }
  .status span { border-right: 1px solid #ddd; padding-left: 2px; white-space: nowrap; }

  .poi { position: absolute; left: 72px; top: 83px; width: 49px; box-shadow: 1px 2px 6px rgba(0, 0, 0, .5); background: #fff; color: #aaa; }
  .poi div { display: flex; align-items: center; justify-content: space-between; height: 25px; padding-left: 3px; }
  .poi i { width: 18px; height: 17px; background: #e8e8e8; }
  .poi button { width: 49px; height: 22px; background: #f0f0f0; color: #111; border: 1px solid #888; box-sizing: border-box; display: block; }
  .ime { position: absolute; left: 824px; top: 9px; width: 164px; height: 20px; box-sizing: border-box; border: 1px solid #b9cbe2; background: #fff; display: flex; align-items: center; gap: 5px; padding-left: 19px; }
  .ime svg { width: 16px; height: 16px; }
  .ime .sg { position: absolute; left: -12px; top: -6px; width: 27px; height: 27px; }
  .ime b { color: #2678c8; font-size: 14px; line-height: 16px; }

  .nav { position: absolute; top: 314px; width: 76px; height: 76px; filter: drop-shadow(0 0 1px #aaa); }
  .prev { left: 16px; }
  .next { right: 15px; }
  .vtools { position: absolute; left: 0; right: 0; bottom: 0; height: 39px; background: rgba(245, 245, 245, .3); }
  .vtools svg { position: absolute; top: 10px; width: 19px; height: 19px; fill: none; stroke: #7ba3da; stroke-width: 1.500; }
  .vtools .big { top: 8px; width: 32px; height: 24px; fill: #96b7e4; stroke: none; }
  .vtools span { position: absolute; top: 0; width: 20px; height: 38px; color: #6c98d4; }
  .vtools small { position: absolute; top: 17px; left: 0; font-size: 9px; line-height: 12px; }

  .ball { position: absolute; box-sizing: border-box; border-radius: 50%; color: #fff; text-align: center; border: 2px solid #fff; box-shadow: 0 1px 4px rgba(0, 0, 0, .6); }
  .orange { left: 302px; top: -26px; width: 46px; height: 46px; background: radial-gradient(circle at 50% 20%, #ffb066, #f7791d); line-height: 62px; }
  .ballclip { position: absolute; left: 315px; top: 30px; width: 56px; height: 24px; overflow: hidden; }
  .green { left: 7px; top: -25px; width: 42px; height: 42px; background: #45c45a; line-height: 58px; }
  .mem { position: absolute; left: 690px; top: 5px; width: 69px; height: 40px; border-radius: 0 8px 8px 0; background: linear-gradient(#f8f8f8, #e2e2e2); box-shadow: 0 1px 3px rgba(0, 0, 0, .6); display: flex; align-items: center; justify-content: flex-end; }
  .mem span { width: 54px; font-size: 11px; }
  .mem b { position: absolute; left: -42px; top: -5px; width: 44px; height: 44px; border-radius: 50%; border: 3px solid #eee; background: radial-gradient(circle at 50% 20%, #6ab8ee, #1a80cc 60%); box-shadow: 0 1px 3px rgba(0, 0, 0, .6); color: #fff; font: 500 16px "Noto Sans", sans-serif; line-height: 44px; text-align: center; }
  .mem small { font-size: 12px; }
  .mem.low { top: 34px; width: 66px; color: #555; background: #e8e8e8; }
  .low b { left: -40px; width: 40px; height: 40px; line-height: 40px; top: -3px; background: #3388c8; color: #d6e6f4; }

  .task { display: flex; align-items: stretch; height: 40px; background: #000; color: #fff; flex: none; }
  .start { width: 48px; display: grid; place-items: center; }
  .start svg { width: 17px; height: 17px; }
  .search { width: 344px; box-sizing: border-box; background: #333; border: 0; padding: 0 9px; color: #fff; font: 14px "Noto Sans", "Noto Sans CJK SC", sans-serif; border-radius: 0; }
  .search::placeholder { color: #a5a5a5; opacity: 1; }
  .apps { display: flex; align-items: stretch; padding-left: 2px; flex: 1; }
  .div { width: 2px; height: 16px; margin: 12px 11px; border: 1px solid #333; border-width: 0 1px; }
  .ta { width: 49px; display: grid; place-items: center; box-sizing: border-box; }
  .ta svg { width: 24px; height: 24px; overflow: visible; }
  .run { background: linear-gradient(#76b9ed, #76b9ed) 50% 100% / 40px 3px no-repeat; }
  .on.ta { background: linear-gradient(#76b9ed, #76b9ed) 50% 100% / 48px 3px no-repeat, #333; box-shadow: none; padding: 0; height: auto; }
  .temp { width: 56px; text-align: center; line-height: 17px; padding-top: 3px; margin-right: 13px; }
  .tray { display: flex; align-items: center; gap: 8px; }
  .tray svg { width: 16px; height: 16px; }
  .tray span { font-size: 14px; }
  .clock { width: 96px; box-sizing: border-box; padding: 3px 0 0 10px; text-align: center; line-height: 17px; }
</style>
